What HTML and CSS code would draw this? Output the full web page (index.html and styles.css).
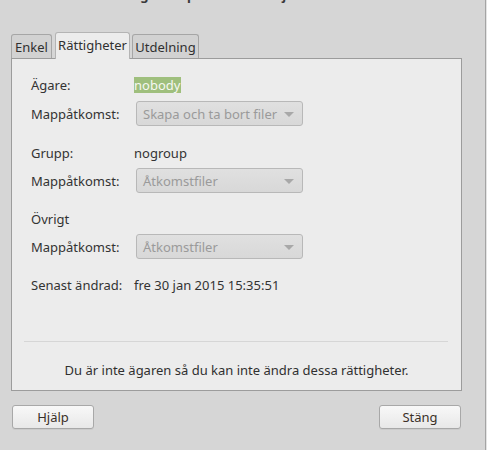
FILE: index.html
```html
<!DOCTYPE html>
<html lang="sv">
<head>
<meta charset="utf-8">
<title>Egenskaper</title>
<link rel="stylesheet" href="styles.css">
</head>
<body>
<div class="window">
  <div class="titlebar"><span class="title">Egenskaper för ZZZ Projekt</span></div>
  <div class="tabs">
    <div class="tab tab-enkel">Enkel</div>
    <div class="tab tab-active">Rättigheter</div>
    <div class="tab tab-utd">Utdelning</div>
  </div>
  <div class="panel">
    <div class="row row-owner">
      <span class="label">Ägare:</span>
      <span class="value highlight">nobody</span>
    </div>
    <div class="row row-combo1">
      <span class="label">Mappåtkomst:</span>
      <div class="combo"><span>Skapa och ta bort filer</span><span class="arrow"></span></div>
    </div>
    <div class="row row-group">
      <span class="label">Grupp:</span>
      <span class="value">nogroup</span>
    </div>
    <div class="row row-combo2">
      <span class="label">Mappåtkomst:</span>
      <div class="combo"><span>Åtkomstfiler</span><span class="arrow"></span></div>
    </div>
    <div class="row row-other">
      <span class="label">Övrigt</span>
    </div>
    <div class="row row-combo3">
      <span class="label">Mappåtkomst:</span>
      <div class="combo"><span>Åtkomstfiler</span><span class="arrow"></span></div>
    </div>
    <div class="row row-date">
      <span class="label">Senast ändrad:</span>
      <span class="value">fre 30 jan 2015 15:35:51</span>
    </div>
    <div class="spacer"></div>
    <div class="separator"></div>
    <div class="message">Du är inte ägaren så du kan inte ändra dessa rättigheter.</div>
  </div>
  <div class="buttons">
    <button class="btn">Hjälp</button>
    <button class="btn">Stäng</button>
  </div>
</div>
</body>
</html>
```

FILE: styles.css
```css
html, body {
  margin: 0;
  padding: 0;
  background: #e4e4e4;
  width: 487px;
  height: 450px;
  overflow: hidden;
  font-family: "Noto Sans", "DejaVu Sans", sans-serif;
  font-size: 13px;
  color: #333333;
}

.window {
  box-sizing: border-box;
  width: 486px;
  height: 450px;
  background: #d6d6d6;
  border-right: 1px solid #a4a4a4;
  padding-left: 11px;
}

.titlebar {
  height: 4px;
  overflow: hidden;
  padding-left: 122px;
}

.title {
  display: block;
  margin-top: -13px;
  font-weight: bold;
  font-size: 13px;
  line-height: 16px;
  color: #3a3a3a;
  white-space: nowrap;
}

.tabs {
  display: flex;
  align-items: flex-end;
  margin-top: 28px;
  height: 26px;
}

.tab {
  box-sizing: border-box;
  height: 24px;
  border: 1px solid #a6a6a6;
  border-bottom: none;
  border-radius: 3px 3px 0 0;
  background: #d2d2d2;
  color: #303030;
  display: flex;
  align-items: center;
  justify-content: center;
  padding-top: 1px;
}

.tab-enkel {
  width: 41px;
  margin-right: 3px;
}

.tab-active {
  width: 75px;
  height: 27px;
  margin-bottom: -1px;
  background: #ececec;
  border-color: #b4b4b4;
  padding-top: 0;
  padding-bottom: 3px;
  position: relative;
  z-index: 1;
}

.tab-utd {
  width: 67px;
  margin-left: 2px;
}

.panel {
  box-sizing: border-box;
  width: 451px;
  height: 333px;
  border: 1px solid #9c9c9c;
  background: #ececec;
  display: flex;
  flex-direction: column;
  padding-left: 19px;
}

.row {
  display: flex;
  align-items: center;
  height: 24px;
}

.label {
  width: 103px;
  flex: none;
}

.highlight {
  background: #9fbf7d;
  color: #f6f8f2;
  padding: 0 1px 0 0;
  line-height: 16px;
}

.row-owner { margin-top: 14px; }
.row-combo1 { margin-top: 4px; height: 25px; }
.row-group { margin-top: 15px; }
.row-combo2 { margin-top: 3px; height: 25px; }
.row-other { margin-top: 14px; }
.row-combo3 { margin-top: 3px; height: 25px; }
.row-date { margin-top: 14px; }

.combo {
  box-sizing: border-box;
  margin-left: 2px;
  width: 167px;
  height: 25px;
  border: 1px solid #b8b8b8;
  border-radius: 3px;
  background: linear-gradient(#e0e0e0, #d8d8d8);
  color: #9a9a9a;
  display: flex;
  align-items: center;
  justify-content: space-between;
  padding: 0 8px 0 6px;
}

.arrow {
  width: 0;
  height: 0;
  border-left: 5px solid transparent;
  border-right: 5px solid transparent;
  border-top: 5px solid #a8a8a8;
  margin-top: 1px;
}

.spacer {
  flex: 1;
}

.separator {
  height: 1px;
  background: #d6d6d6;
  width: 424px;
  margin-left: -7px;
  margin-bottom: 19px;
}

.message {
  text-align: center;
  margin-left: -19px;
  margin-bottom: 11px;
  color: #303030;
}

.buttons {
  display: flex;
  justify-content: space-between;
  width: 449px;
  margin-left: 1px;
  margin-top: 14px;
}

.btn {
  box-sizing: border-box;
  width: 82px;
  height: 24px;
  border: 1px solid #a8a8a8;
  border-radius: 3px;
  background: linear-gradient(#f8f8f8, #e8e8e8);
  font-family: "Noto Sans", "DejaVu Sans", sans-serif;
  font-size: 13px;
  color: #3a3028;
  padding: 0;
  box-shadow: 0 1px 0 rgba(0,0,0,0.05);
}
```
